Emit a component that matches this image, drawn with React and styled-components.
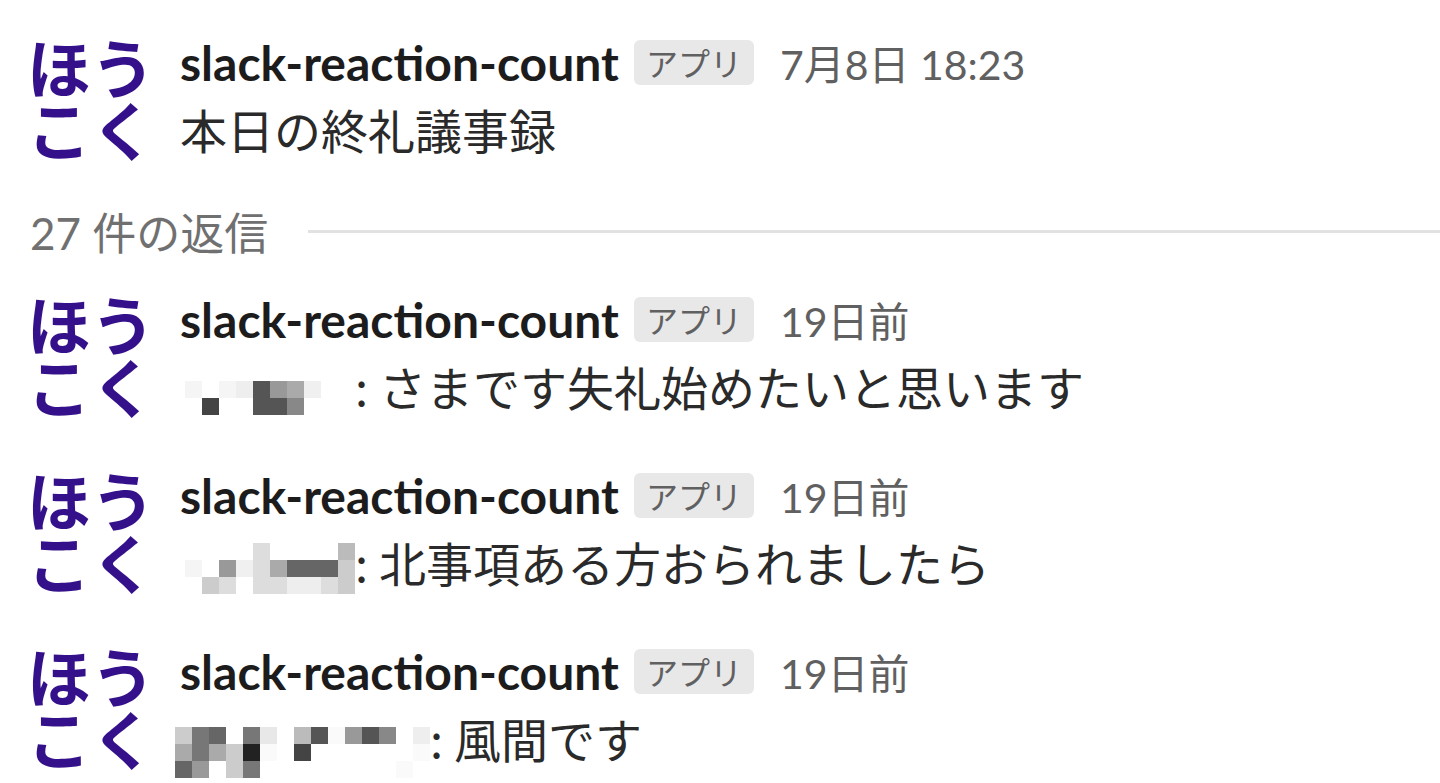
import React from "react";
import styled, { createGlobalStyle } from "styled-components";

const Global = createGlobalStyle`
  html, body { margin: 0; padding: 0; background: #ffffff; }
  body { font-family: Lato, "Noto Sans CJK JP", sans-serif; overflow: hidden; }
`;

const Page = styled.div`
  width: 1440px;
  height: 783px;
  overflow: hidden;
  box-sizing: border-box;
  padding: 19px 0 0 27px;
  background: #ffffff;
`;

const Message = styled.div`
  display: flex;
  align-items: flex-start;
  gap: 25px;
  padding: 10px 0 40px;
`;

const Avatar = styled.div`
  flex: none;
  width: 128px;
  height: 118px;
  margin-top: 5px;
  font-family: "Noto Sans CJK JP", sans-serif;
  font-weight: 700;
  font-size: 64px;
  line-height: 62px;
  color: #34108a;
  white-space: pre;
`;

const Content = styled.div`
  display: flex;
  flex-direction: column;
  min-width: 0;
`;

const Header = styled.div`
  display: flex;
  align-items: center;
  height: 66px;
  margin-bottom: 4px;
`;

const Name = styled.span`
  font-family: Lato, "Noto Sans CJK JP", sans-serif;
  font-weight: 700;
  font-size: 48px;
  color: #1d1c1d;
  white-space: nowrap;
`;

const Badge = styled.span`
  margin-left: 15px;
  padding: 0 12px;
  height: 45px;
  display: inline-flex;
  align-items: center;
  border-radius: 6px;
  background: #e8e8e8;
  color: #616061;
  font-family: "Noto Sans CJK JP", sans-serif;
  font-size: 32px;
`;

const Time = styled.span`
  margin-left: 26px;
  color: #616061;
  font-family: Lato, "Noto Sans CJK JP", sans-serif;
  font-size: 41px;
  white-space: nowrap;
`;

const Body = styled.div`
  display: flex;
  align-items: flex-start;
  height: 56px;
  font-family: "Noto Sans CJK JP", sans-serif;
  font-size: 47px;
  line-height: 60px;
  color: #2a2a2a;
  white-space: nowrap;
`;

const Mosaic = styled.div`
  flex: none;
  display: grid;
  grid-template-columns: repeat(${(p) => p.$cols}, 17px);
  grid-auto-rows: 17px;
  margin-top: ${(p) => p.$top}px;
  margin-left: ${(p) => p.$left}px;
`;

const Cell = styled.div`
  background: ${(p) => p.$c};
`;

const Colon = styled.span`
  width: 24px;
`;

const Divider = styled.div`
  display: flex;
  align-items: center;
  gap: 40px;
  height: 56px;
  margin: 8px 0 17px 3px;
`;

const DividerLabel = styled.span`
  font-family: Lato, "Noto Sans CJK JP", sans-serif;
  font-size: 44px;
  color: #717071;
  white-space: nowrap;
`;

const DividerLine = styled.div`
  flex: 1;
  height: 3px;
  background: #e2e2e2;
`;

const hex = (s) => "#" + (s.length === 2 ? s + s + s : s);

const M2 = [
  "f5 fff f5 ee 55 99 aa f0 fff fff",
  "fff 44 fff fff 55 55 88 fff fff fff",
];
const M3 = [
  "fff fff fff fff dd fff fff fff fff bb",
  "f5 fff 99 f0 dd aa 66 66 66 cc",
  "fff cc dd fff dd dd ee ee dd cc",
];
const M4 = [
  "cc 77 66 fff 77 e8 fff bb 55 fa 99 55 88 fff ee",
  "aa 77 aa cc 22 fa fff 44 fff fff fff fff fff fff fa",
  "66 99 fff cc 77 fff fff fff fff fff fff fff fff fa fff",
];

function Pixels({ rows, top, left }) {
  const grid = rows.map((r) => r.split(" "));
  return (
    <Mosaic $cols={grid[0].length} $top={top} $left={left}>
      {grid.flat().map((c, i) => (
        <Cell key={i} $c={c === "fff" ? "#ffffff" : hex(c)} />
      ))}
    </Mosaic>
  );
}

function Msg({ time, children }) {
  return (
    <Message>
      <Avatar>{"ほう\nこく"}</Avatar>
      <Content>
        <Header>
          <Name>slack-reaction-count</Name>
          <Badge>アプリ</Badge>
          <Time>{time}</Time>
        </Header>
        <Body>{children}</Body>
      </Content>
    </Message>
  );
}

export default function App() {
  return (
    <Page>
      <Global />
      <Msg time="7月8日 18:23">本日の終礼議事録</Msg>
      <Divider>
        <DividerLabel>27 件の返信</DividerLabel>
        <DividerLine />
      </Divider>
      <Msg time="19日前">
        <Pixels rows={M2} top={25} left={5} />
        <Colon>:</Colon>
        <span>さまです失礼始めたいと思います</span>
      </Msg>
      <Msg time="19日前">
        <Pixels rows={M3} top={11} left={5} />
        <Colon>:</Colon>
        <span>北事項ある方おられましたら</span>
      </Msg>
      <Msg time="19日前">
        <Pixels rows={M4} top={19} left={-5} />
        <Colon>:</Colon>
        <span>風間です</span>
      </Msg>
    </Page>
  );
}
